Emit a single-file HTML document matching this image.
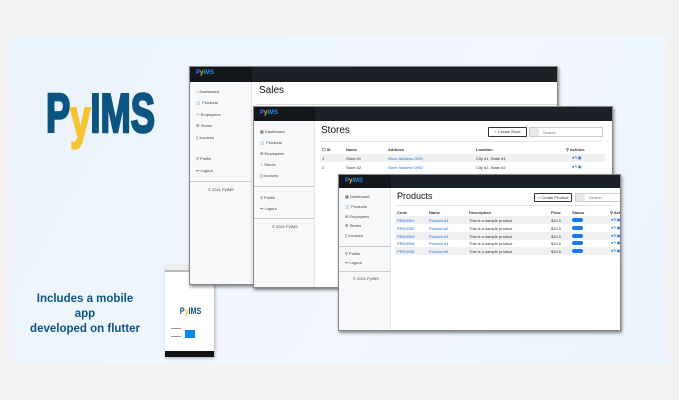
<!DOCTYPE html>
<html><head><meta charset="utf-8"><style>
*{margin:0;padding:0;box-sizing:border-box}
body{width:679px;height:400px;background:#f2f2f2;position:relative;overflow:hidden;font-family:"Liberation Sans",sans-serif}
.panel{position:absolute;left:12px;top:36px;width:655px;height:328px;background:linear-gradient(120deg,#eaf2fb,#f2f7fd 60%,#eaf2fb)}
.logo{position:absolute;left:46px;top:86px;font-weight:bold;font-size:55px;color:#0b5580;-webkit-text-stroke:2.5px #0b5580;transform:scaleX(.66);transform-origin:left top;letter-spacing:0px;line-height:55px}
.logo .y{color:#f5c430;-webkit-text-stroke:2.5px #f5c430;position:relative;top:5px}
.tag{position:absolute;left:20px;top:292px;width:130px;text-align:center;font-weight:bold;font-size:11.5px;line-height:15px;color:#0b5580}
.win{position:absolute;background:#fff;box-shadow:1px 2px 3px rgba(0,0,0,.45);border:1px solid #888;overflow:hidden}
.hd{position:absolute;left:0;top:0;right:0;background:#1c2128}
.hdl{position:absolute;left:0;top:0;background:#13171c;height:100%}
.hdl b{position:absolute;left:6px;top:3px;font-size:6px;color:#2a8be0}
.hdl b i{color:#f5c430;font-style:normal}
.sb{position:absolute;left:0;bottom:0;background:#f7f8fa;border-right:1px solid #e2e4e8}
.sb div{font-size:4px;color:#444;position:absolute;left:6px}
.sb hr{position:absolute;left:0;right:0;border:0;border-top:1px solid #ccc}
.t{position:absolute;font-size:4px;color:#333;white-space:nowrap}
.b{color:#1a6fd0}
.h{position:absolute;color:#111}
.row{position:absolute;height:6px;background:#f0f0f2}
.pill{position:absolute;width:11px;height:4px;border-radius:2px;background:#1a7ae8}
.ic{position:absolute;font-size:4px;color:#1a6fd0}
.btn{position:absolute;border:1px solid #333;border-radius:1px;font-size:4px;color:#333;text-align:center}
.srch{position:absolute;border:1px solid #ccc;font-size:4px;color:#777;display:flex;align-items:center}
.srch span{display:block;background:#e8e9eb;height:100%;width:9px;margin-right:4px}
</style></head><body>
<div class="panel"></div>
<div class="logo">P<span class="y">y</span>IMS</div>
<div class="tag">Includes a mobile<br>app<br>developed on flutter</div>

<!-- phone -->
<div style="position:absolute;left:165px;top:266px;width:49px;height:91px;background:#fff;box-shadow:1px 1px 3px rgba(0,0,0,.3)">
 <div style="height:4px;background:#eee"></div>
 <div style="position:absolute;left:0;top:4px;right:0;height:2px;background:#bbb"></div>
 <div style="position:absolute;left:12px;top:40px;font-weight:bold;font-size:9px;color:#0b5580;transform:scaleX(.8)">P<span style="color:#f5c430">y</span>IMS</div>
 <div style="position:absolute;left:6px;top:62px;width:10px;height:1px;background:#999"></div>
 <div style="position:absolute;left:6px;top:70px;width:10px;height:1px;background:#999"></div>
 <div style="position:absolute;left:20px;top:64px;width:10px;height:8px;background:#0a8af0"></div>
 <div style="position:absolute;left:0;bottom:0;right:0;height:6px;background:#111"></div>
</div>

<!-- window 1: Sales -->
<div class="win" style="left:189px;top:66px;width:369px;height:219px">
 <div class="hd" style="height:15px"><div class="hdl" style="width:62px"><b>P<i>y</i>IMS</b></div></div>
 <div class="sb" style="top:15px;width:62px">
  <div class="b" style="top:7px">◌ Dashboard</div><div style="top:18px">🛒 Products</div><div style="top:30px">⚇ Employees</div><div style="top:41px">⚙ Stores</div><div style="top:53px">▯ Invoices</div>
  <div style="top:74px">⚲ Profile</div><div style="top:86px">↦ Logout</div>
  <hr style="top:99px"><div style="top:105px;left:18px">© 2021 PyIMS</div>
 </div>
 <div class="h" style="left:69px;top:18px;font-size:10px">Sales</div>
 <div style="position:absolute;left:66px;right:0;top:37px;border-top:1px solid #ddd"></div>
</div>

<!-- window 2: Stores -->
<div class="win" style="left:253px;top:106px;width:360px;height:182px">
 <div class="hd" style="height:14px"><div class="hdl" style="width:61px"><b>P<i>y</i>IMS</b></div></div>
 <div class="sb" style="top:14px;width:61px">
  <div class="b" style="top:8px">▦ Dashboard</div><div style="top:19px">🛒 Products</div><div style="top:30px">✉ Employees</div><div style="top:41px">♀ Stores</div><div style="top:52px">▯ Invoices</div>
  <hr style="top:65px"><div style="top:74px">⚲ Profile</div><div style="top:85px">↦ Logout</div>
  <hr style="top:97px"><div style="top:103px;left:18px">© 2021 PyIMS</div>
 </div>
 <div class="h" style="left:67px;top:18px;font-size:10px">Stores</div>
 <div class="btn" style="left:234px;top:20px;width:39px;height:10px;line-height:8px">+ Create Store</div>
 <div class="srch" style="left:275px;top:20px;width:74px;height:10px"><span></span>Search</div>
 <div style="position:absolute;left:66px;right:10px;top:34px;border-top:1px solid #e5e5e5"></div>
 <div class="t" style="left:68px;top:40px;font-weight:bold">☐ ID</div><div class="t" style="left:92px;top:40px;font-weight:bold">Name</div><div class="t" style="left:134px;top:40px;font-weight:bold">Address</div><div class="t" style="left:222px;top:40px;font-weight:bold">Location</div><div class="t" style="left:312px;top:40px;font-weight:bold">⚲ Actions</div>
 <div class="row" style="left:66px;top:47px;width:285px;height:8px"></div>
 <div class="t" style="left:68px;top:49px">1</div><div class="t" style="left:92px;top:49px">Store #1</div><div class="t b" style="left:134px;top:49px">Store Address 0001</div><div class="t" style="left:222px;top:49px">City #1, State #1</div><div class="ic" style="left:318px;top:48px">●✎▣</div>
 <div class="t" style="left:68px;top:58px">2</div><div class="t" style="left:92px;top:58px">Store #2</div><div class="t b" style="left:134px;top:58px">Store Address 0002</div><div class="t" style="left:222px;top:58px">City #2, State #2</div><div class="ic" style="left:318px;top:57px">●✎▣</div>
</div>

<!-- window 3: Products -->
<div class="win" style="left:338px;top:174px;width:283px;height:157px">
 <div class="hd" style="height:13px"><div class="hdl" style="width:52px"><b>P<i>y</i>IMS</b></div></div>
 <div class="sb" style="top:13px;width:52px">
  <div class="b" style="top:6px">▦ Dashboard</div><div style="top:16px">🛒 Products</div><div style="top:26px">✉ Employees</div><div style="top:35px">⚙ Stores</div><div style="top:45px">▯ Invoices</div>
  <hr style="top:58px"><div style="top:63px">⚲ Profile</div><div style="top:72px">↦ Logout</div>
  <hr style="top:83px"><div style="top:88px;left:14px">© 2021 PyIMS</div>
 </div>
 <div class="h" style="left:58px;top:16px;font-size:9px">Products</div>
 <div class="btn" style="left:195px;top:18px;width:38px;height:9px;line-height:7px">+ Create Product</div>
 <div class="srch" style="left:236px;top:18px;width:62px;height:9px"><span></span>Search</div>
 <div style="position:absolute;left:56px;right:6px;top:30px;border-top:1px solid #e5e5e5"></div>
 <div class="t" style="left:58px;top:35px;font-weight:bold">Code</div><div class="t" style="left:90px;top:35px;font-weight:bold">Name</div><div class="t" style="left:130px;top:35px;font-weight:bold">Description</div><div class="t" style="left:212px;top:35px;font-weight:bold">Price</div><div class="t" style="left:233px;top:35px;font-weight:bold">Status</div><div class="t" style="left:271px;top:35px;font-weight:bold">⚲ Actions</div>
 <div class="row" style="left:56px;top:41px;width:222px;height:8px"></div>
 <div class="row" style="left:56px;top:57px;width:222px;height:8px"></div>
 <div class="row" style="left:56px;top:72px;width:222px;height:8px"></div>
 <div class="t b" style="left:58px;top:43px">PRD0001</div><div class="t b" style="left:90px;top:43px">Product #1</div><div class="t" style="left:130px;top:43px">This is a sample product</div><div class="t" style="left:212px;top:43px">$10.0</div><div class="pill" style="left:233px;top:43px"></div><div class="ic" style="left:272px;top:42px">●✎▣</div>
 <div class="t b" style="left:58px;top:51px">PRD0002</div><div class="t b" style="left:90px;top:51px">Product #2</div><div class="t" style="left:130px;top:51px">This is a sample product</div><div class="t" style="left:212px;top:51px">$10.0</div><div class="pill" style="left:233px;top:51px"></div><div class="ic" style="left:272px;top:50px">●✎▣</div>
 <div class="t b" style="left:58px;top:59px">PRD0003</div><div class="t b" style="left:90px;top:59px">Product #3</div><div class="t" style="left:130px;top:59px">This is a sample product</div><div class="t" style="left:212px;top:59px">$10.0</div><div class="pill" style="left:233px;top:59px"></div><div class="ic" style="left:272px;top:58px">●✎▣</div>
 <div class="t b" style="left:58px;top:66px">PRD0004</div><div class="t b" style="left:90px;top:66px">Product #4</div><div class="t" style="left:130px;top:66px">This is a sample product</div><div class="t" style="left:212px;top:66px">$10.0</div><div class="pill" style="left:233px;top:66px"></div><div class="ic" style="left:272px;top:65px">●✎▣</div>
 <div class="t b" style="left:58px;top:74px">PRD0005</div><div class="t b" style="left:90px;top:74px">Product #5</div><div class="t" style="left:130px;top:74px">This is a sample product</div><div class="t" style="left:212px;top:74px">$10.0</div><div class="pill" style="left:233px;top:74px"></div><div class="ic" style="left:272px;top:73px">●✎▣</div>
</div>
</body></html>
